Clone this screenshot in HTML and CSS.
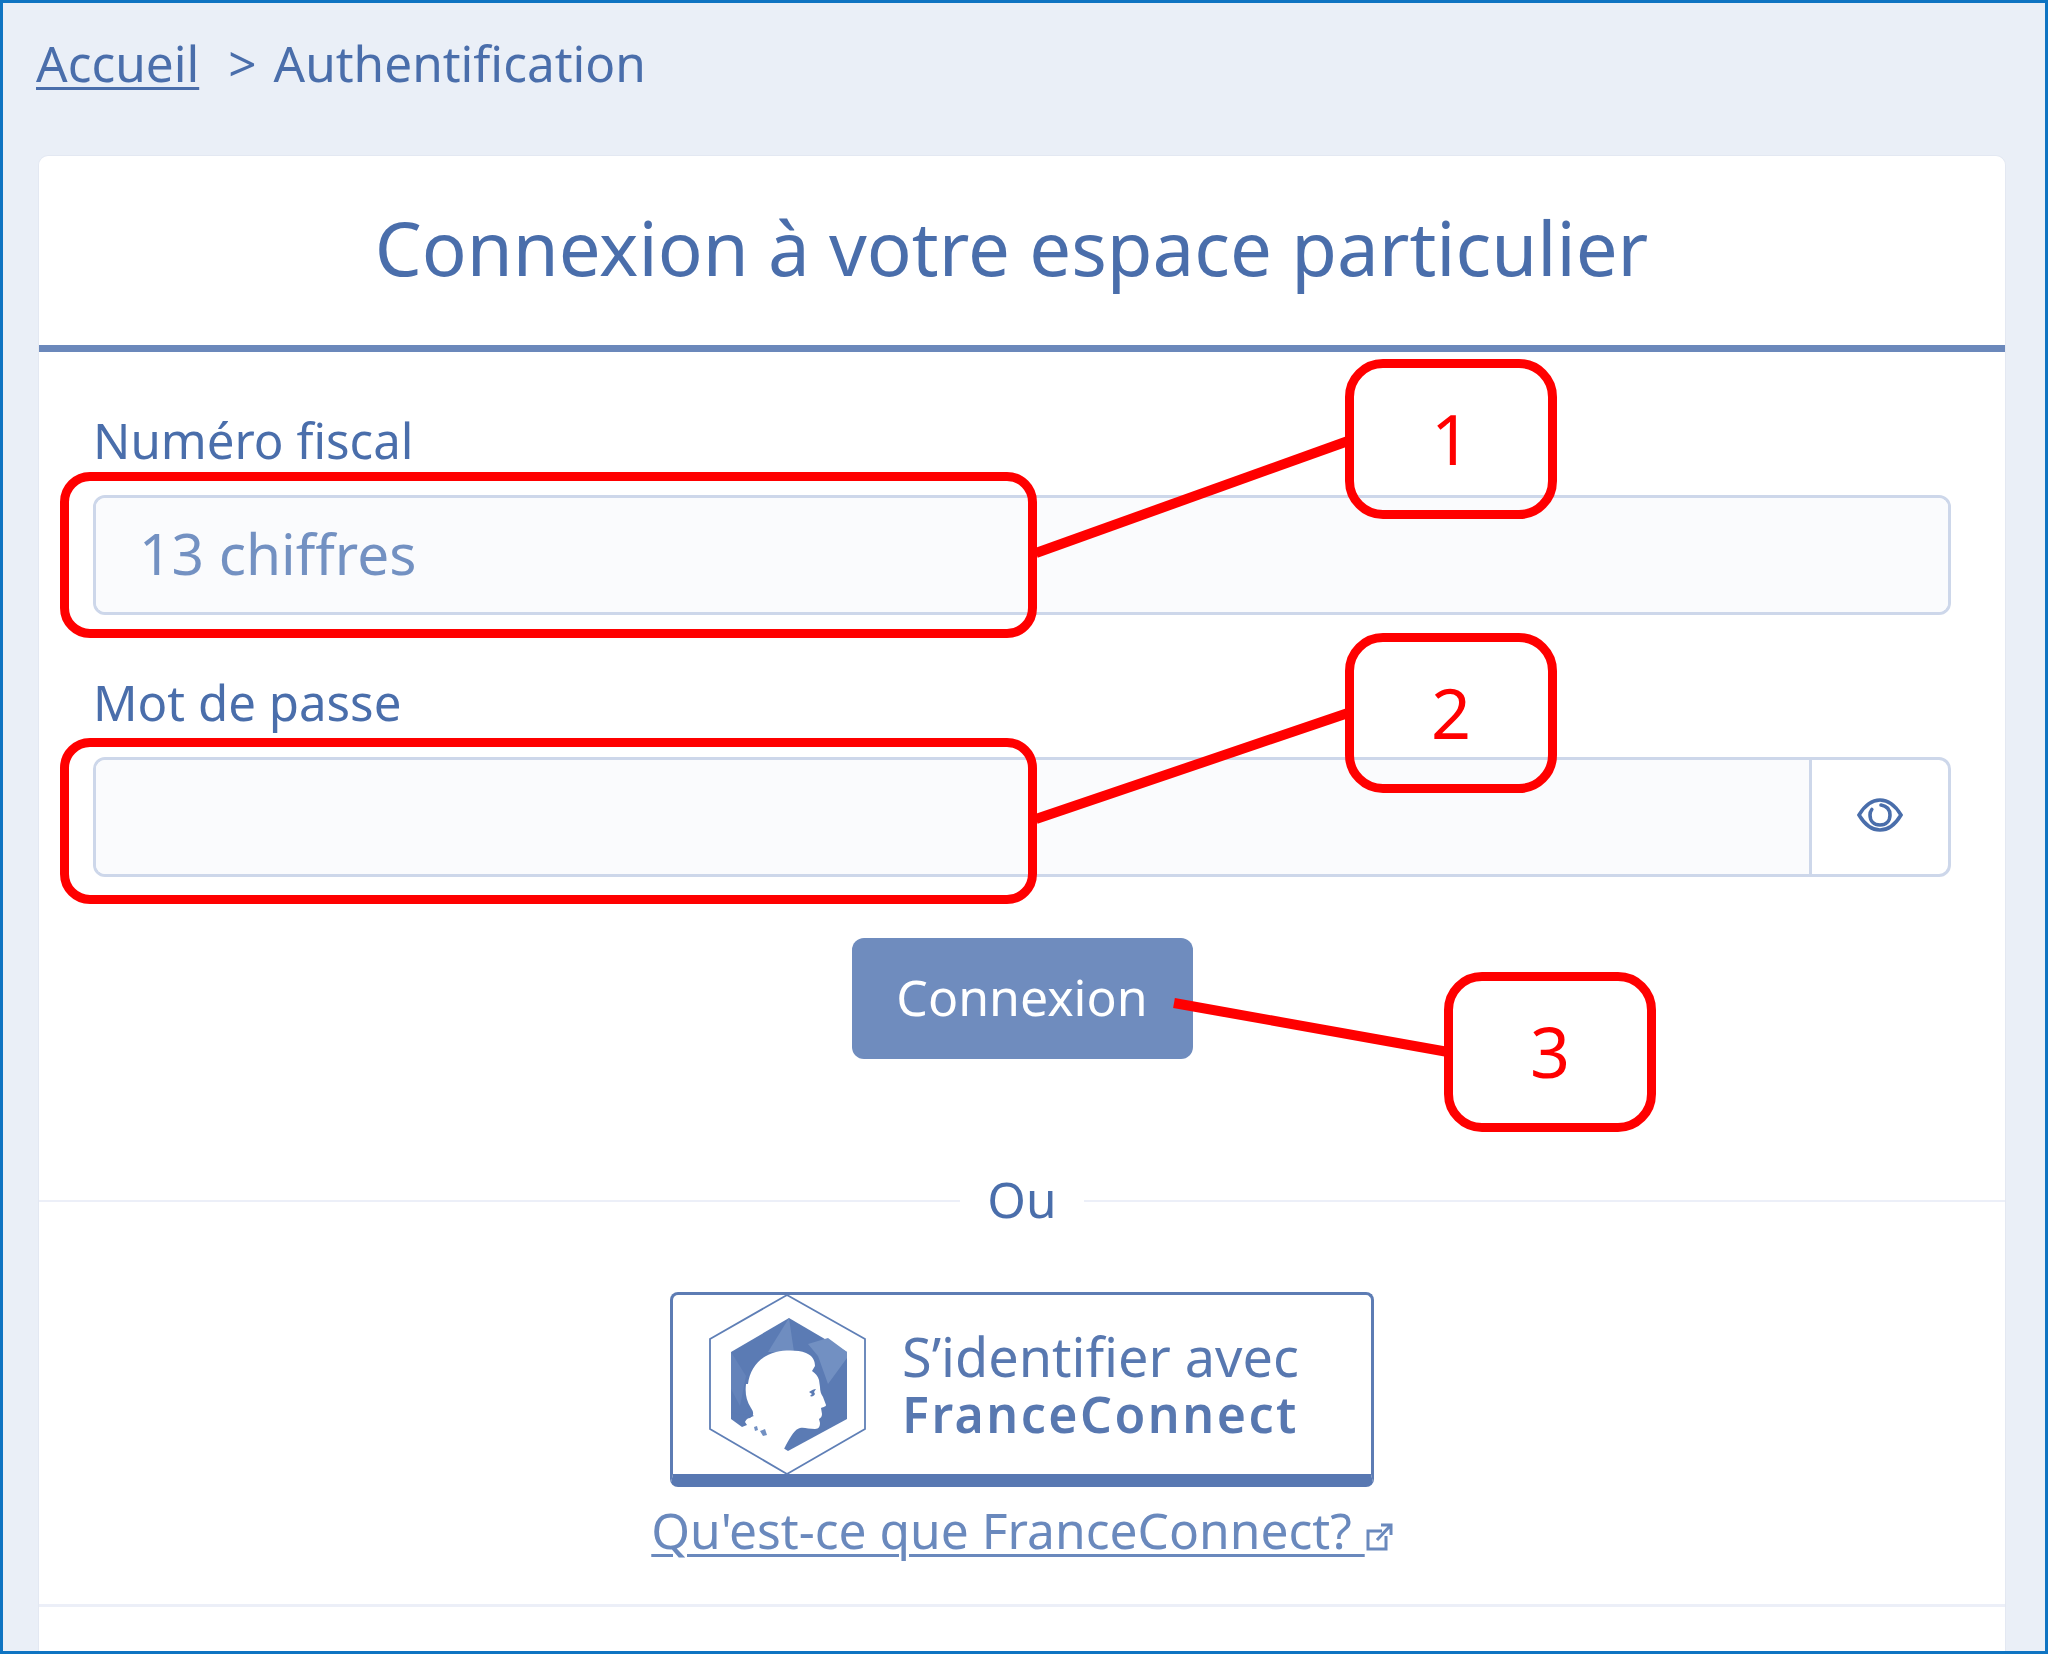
FILE: index.html
```html
<!DOCTYPE html>
<html lang="fr">
<head>
<meta charset="utf-8">
<title>Authentification</title>
<link rel="stylesheet" href="styles.css">
</head>
<body>
<div class="frame">
  <nav class="crumbs"><a href="#" class="crumb-link">Accueil</a><span class="crumb-sep">&gt;</span><span>Authentification</span></nav>
  <main class="card">
    <header class="card-head"><h1 class="title">Connexion à votre espace particulier</h1></header>
    <form class="form">
      <div class="field">
        <div class="label">Numéro fiscal</div>
        <div class="input-wrap"><div class="input placeholder">13 chiffres</div></div>
      </div>
      <div class="field field-second">
        <div class="label">Mot de passe</div>
        <div class="input-wrap">
          <div class="input"></div>
          <div class="eye-btn">
            <svg class="eye" viewBox="0 0 46 34" fill="none" stroke="#4a6eab" stroke-width="3.600" stroke-linecap="round">
              <path d="M2 17C8 7 15 2 23 2s15 5 21 15c-6 10-13 15-21 15S8 27 2 17Z"/>
              <path d="M24 7c6 1 9 5 9 10 0 6-4 10-10 10s-10-4-10-10c0-2 .6-4 1.800-5.500"/>
            </svg>
          </div>
        </div>
      </div>
      <div class="submit-row"><div class="submit">Connexion</div></div>
    </form>
    <div class="or"><span class="or-text">Ou</span></div>
    <div class="fc">
      <a href="#" class="fc-btn">
        <svg class="fc-logo" viewBox="0 0 220 210">
          <polygon points="97,11 175,55 175,145 97,190 20,145 20,55" fill="#fff" stroke="#5f7fb6" stroke-width="1.800"/>
          <polygon points="99,34 157,68 157,135 98,167 41,132 41,68" fill="#5b7bb4"/>
          <polygon points="99,34 104,68 78,68" fill="#6f8dc0"/>
          <polygon points="118,60 138,54 157,68 157,74 138,100 128,72" fill="#7290c2"/>
          <polygon points="41,68 56,92 50,122 41,105" fill="#6483ba"/>
          <path fill="#fff" d="M58 100C60 84 70 72 86 68c10-2 22-2 30 1 7 3 9 8 9 13l-3 5c3 2 6 5 7 9l1 7c0 4 1 7 3 10l3 8c0 2-4 2-5 3l1 6c0 2-1 4-3 5l1 4c0 3-1 6-5 6-6 0-11-2-15-1-5 1-9 8-14 17l-4 8-21-9-32-22-1-6c8 1 18 3 22 2 4-2 4-6 1-10-5-8-6-15-5-24Z"/>
          <polygon points="41,132 41,136 98,172 60,148" fill="#fff"/>
          <path fill="#5b7bb4" d="M41 128c6 3 13 4 20 2l3 2c-5 1-8 3-9 6l2 3-5 2-11-8Z"/>
          <path fill="#7290c2" d="M64 143l3-1 1 4-3 1ZM70 147l5-2 2 6-4 1Z"/>
          <path fill="#5b7bb4" d="M119 108c3-2 5-3 7-3l-2 3 1 2c-1 2-3 3-5 2l2-2Z"/>
        </svg>
        <span class="fc-text"><span class="fc-line">S’identifier avec</span><span class="fc-line fc-strong">FranceConnect</span></span>
      </a>
      <a href="#" class="fc-link">Qu'est-ce que FranceConnect? <svg class="ext" viewBox="0 0 28 28" fill="none" stroke="#6a89bd" stroke-width="3"><path d="M17 8H3v18h18V13"/><path d="M12 17 25 3M16 2h10v10"/></svg></a>
    </div>
    <div class="card-foot"></div>
  </main>

  <svg class="lines" viewBox="0 0 2048 1654">
    <line x1="1036" y1="553" x2="1348" y2="441"/>
    <line x1="1036" y1="819" x2="1348" y2="713"/>
    <line x1="1174" y1="1003" x2="1448" y2="1052"/>
  </svg>
  <div class="ring ring-1"></div>
  <div class="ring ring-2"></div>
  <div class="callout callout-1">1</div>
  <div class="callout callout-2">2</div>
  <div class="callout callout-3">3</div>
</div>
</body>
</html>
```
FILE: styles.css
```css
* { box-sizing: border-box; }
html, body { margin: 0; padding: 0; background: #fff; }
body { width: 2048px; height: 1654px; overflow: hidden; font-family: "Noto Sans", sans-serif; color: #4a6eab; }
.frame {
  position: relative;
  width: 2048px;
  height: 1654px;
  border: 3px solid #0f74c2;
  background: #eaeff7;
  overflow: hidden;
  display: flex;
  flex-direction: column;
}
.crumbs { height: 152px; padding: 22px 0 0 33px; font-size: 49.500px; line-height: 76px; display: flex; }
.crumb-link { color: #4a6eab; text-decoration: underline; text-decoration-thickness: 3px; text-underline-offset: 5px; }
.crumb-sep { margin: 0 17px 0 29px; }
.card {
  flex: 1;
  margin: 0 39px 0 35px;
  background: #fff;
  border: 1px solid #e3e8f2;
  border-bottom: 0;
  border-radius: 10px 10px 0 0;
  display: flex;
  flex-direction: column;
}
.card-head { height: 196px; border-bottom: 7px solid #6b88bb; display: flex; justify-content: center; }
.title { margin: 0; padding: 38px 21px 0 0; font-size: 74.400px; line-height: 106px; font-weight: 400; color: #4a6eab; }
.form { padding: 0 54px; display: flex; flex-direction: column; }
.field { display: flex; flex-direction: column; }
.field:first-child { padding-top: 58px; }
.field-second { padding-top: 57px; }
.label { height: 93px; font-size: 49.200px; line-height: 75px; margin-top: -8px; color: #4a6eab; }
.input-wrap { height: 120px; display: flex; border: 3px solid #cdd7ea; border-radius: 12px; overflow: hidden; background: #fff; }
.input { flex: 1; background: #fafbfd; }
.placeholder { padding-left: 43px; font-size: 56.800px; line-height: 111px; color: #7391c2; }
.eye-btn { width: 139px; border-left: 3px solid #cdd7ea; display: flex; align-items: center; justify-content: center; }
.eye { width: 46px; height: 34px; margin: -4px 0 0 0; }
.submit-row { display: flex; justify-content: center; padding-top: 61px; }
.submit {
  width: 341px; height: 121px; border-radius: 12px; background: #6f8cbe; color: #fff;
  font-size: 50px; line-height: 119px; text-align: center;
}
.or { margin-top: 141px; height: 2px; background: #eceff8; display: flex; justify-content: center; align-items: center; }
.or-text { background: #fff; width: 124px; padding-bottom: 4px; text-align: center; font-size: 49.500px; line-height: 60px; color: #4a6eab; }
.fc { display: flex; flex-direction: column; align-items: center; padding-top: 90px; }
.fc-btn {
  width: 704px; height: 195px; border: 3px solid #5d7cb4; border-bottom: 13px solid #5878b2; border-radius: 8px;
  display: flex; text-decoration: none; background: #fff; position: relative;
}
.fc-logo { position: absolute; left: 17px; top: -11px; width: 220px; height: 210px; }
.fc-text { margin-left: 229px; padding-top: 32px; display: flex; flex-direction: column; color: #5878b0; font-size: 54px; line-height: 58px; }
.fc-strong { font-size: 50px; font-weight: 600; letter-spacing: 2.500px; }
.fc-link { margin-top: 5px; font-size: 49.700px; line-height: 76px; color: #6a89bd; text-decoration: underline; text-decoration-thickness: 3px; text-underline-offset: 5px; white-space: nowrap; }
.ext { width: 28px; height: 28px; vertical-align: -2px; margin-left: 0; }
.card-foot { margin-top: 36px; height: 3px; background: #eceff8; }
.lines { position: absolute; left: -3px; top: -3px; width: 2048px; height: 1654px; pointer-events: none; }
.lines line { stroke: #ff0000; stroke-width: 10; }
.ring { position: absolute; left: 57px; width: 977px; height: 166px; border: 9.500px solid #ff0000; border-radius: 30px; }
.ring-1 { top: 469px; }
.ring-2 { top: 735px; }
.callout {
  position: absolute; width: 212px; height: 160px; border: 9.500px solid #ff0000; border-radius: 38px;
  color: #ff0000; font-size: 70px; line-height: 141px; text-align: center;
}
.callout-1 { left: 1342px; top: 356px; }
.callout-2 { left: 1342px; top: 630px; }
.callout-3 { left: 1441px; top: 969px; }
```
